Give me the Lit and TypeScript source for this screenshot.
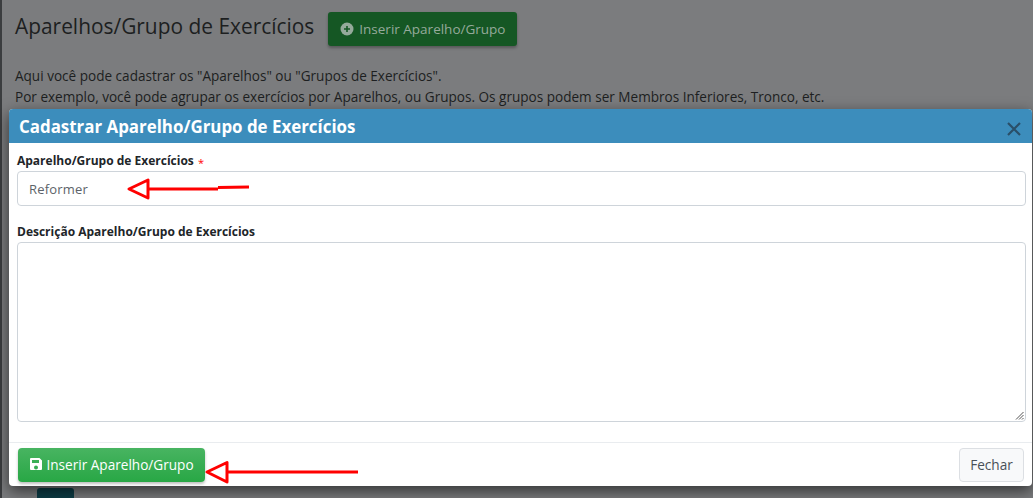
import { LitElement, html, css, svg } from "lit";
import { customElement } from "lit/decorators.js";

const arrows = svg`
  <g fill="none" stroke="#f00" stroke-width="3" stroke-linejoin="round">
    <path d="M129 189 L148 180 L148 198 Z"/>
    <path d="M148 189 L218 189 M218 187.5 L249 187"/>
    <path d="M207 472 L227 462.5 L227 482 Z"/>
    <path d="M227 472 L358 472"/>
  </g>`;

@customElement("app-root")
export class AppRoot extends LitElement {
  static styles = css`
    :host { display: block; width: 1033px; height: 498px; position: relative; overflow: hidden; background: #7b7c7e; font-family: "Open Sans", "Noto Sans", sans-serif; color: #212529; }
    .page { height: 498px; box-sizing: border-box; padding: 12px 0 0 13px; border-left: 2px solid #3b3d3f; color: #1d1f21; }
    .head { display: flex; align-items: flex-start; gap: 14px; }
    h1 { margin: 0; font-size: 20.9px; font-weight: 400; line-height: 28px; }
    .ghost { height: 34px; padding: 0 12px; display: flex; align-items: center; gap: 5px; background: #155724; color: #95aa9b; border-radius: 3px; font-size: 13.5px; box-shadow: 0 2px 3px rgba(0,0,0,.3); }
    .ghost svg { width: 14px; height: 14px; }
    .intro { margin: 19px 0 0; font-size: 13.57px; line-height: 21px; }
    .intro p { margin: 0; }
    .peek { position: absolute; left: 37px; top: 488px; width: 37px; height: 10px; background: #0d3d46; border-radius: 3px 3px 0 0; }
    .peektext { position: absolute; left: 85px; top: 495px; font-size: 12px; font-weight: 600; color: #1d1f21; }
    .modal { position: absolute; left: 9px; top: 109px; width: 1023px; height: 377px; background: #fff; border-radius: 4px; box-shadow: 0 5px 15px rgba(0,0,0,.6); display: flex; flex-direction: column; overflow: hidden; }
    .mhead { height: 34px; flex: none; background: #3c8dbc; color: #fff; display: flex; align-items: center; justify-content: space-between; padding: 0 11px 0 10px; }
    .mhead h2 { margin: 0; font-size: 16.9px; font-weight: 700; }
    .x { width: 14px; height: 14px; margin-top: 5px; }
    .mbody { flex: 1; padding: 9px 6px 0 8px; display: flex; flex-direction: column; }
    label { font-size: 12px; font-weight: 700; line-height: 18px; color: #212529; display: block; }
    .req { color: #f00; font-size: 11px; font-weight: 400; margin-left: 1px; position: relative; top: 2px; }
    .input { margin-top: 1px; height: 33px; box-sizing: content-box; border: 1px solid #ced4da; border-radius: 4px; display: flex; align-items: center; padding: 1px 0 0 11px; height: 32px; font-size: 13px; color: #5c6369; letter-spacing: .2px; }
    .l2 { margin-top: 17px; }
    .area { margin-top: 1px; height: 178px; border: 1px solid #ced4da; border-radius: 4px; position: relative; }
    .grip { position: absolute; right: 1px; bottom: 1px; width: 9px; height: 9px; }
    .mfoot { height: 43px; flex: none; border-top: 1px solid #e9ecef; display: flex; align-items: center; justify-content: space-between; padding: 0 8px 0 9px; }
    .save { height: 34px; width: 187px; box-sizing: border-box; display: flex; align-items: center; justify-content: center; gap: 3px; color: #fff; font-size: 13.6px; border-radius: 4px; background: linear-gradient(#48b461, #28a745); box-shadow: 0 2px 3px rgba(0,0,0,.25); }
    .save svg { width: 14px; height: 14px; margin-top: -2px; }
    .close { height: 34px; width: 65px; box-sizing: border-box; display: flex; align-items: center; justify-content: center; color: #495057; font-size: 13.6px; background: #f8f9fa; border: 1px solid #dcdfe3; border-radius: 4px; }
    .over { position: absolute; left: 0; top: 0; pointer-events: none; }
  `;

  render() {
    return html`
      <div class="page">
        <div class="head">
          <h1>Aparelhos/Grupo de Exercícios</h1>
          <div class="ghost">
            <svg viewBox="0 0 14 14"><circle cx="7" cy="7" r="6.5" fill="#95aa9b"/><path d="M7 4v6M4 7h6" stroke="#155724" stroke-width="1.6"/></svg>
            Inserir Aparelho/Grupo
          </div>
        </div>
        <div class="intro">
          <p>Aqui você pode cadastrar os "Aparelhos" ou "Grupos de Exercícios".</p>
          <p>Por exemplo, você pode agrupar os exercícios por Aparelhos, ou Grupos. Os grupos podem ser Membros Inferiores, Tronco, etc.</p>
        </div>
      </div>
      <div class="peek"></div>
      <div class="peektext">Wall Unit</div>
      <div class="modal">
        <div class="mhead">
          <h2>Cadastrar Aparelho/Grupo de Exercícios</h2>
          <svg class="x" viewBox="0 0 14 14"><path d="M1 1l12 12M13 1L1 13" stroke="#2a4f68" stroke-width="2.2"/></svg>
        </div>
        <div class="mbody">
          <label>Aparelho/Grupo de Exercícios <span class="req">*</span></label>
          <div class="input">Reformer</div>
          <label class="l2">Descrição Aparelho/Grupo de Exercícios</label>
          <div class="area">
            <svg class="grip" viewBox="0 0 9 9"><path d="M1 8.5L8.5 1M4 8.5L8.5 4M7 8.5L8.5 7" stroke="#555" stroke-width="1"/></svg>
          </div>
        </div>
        <div class="mfoot">
          <div class="save">
            <svg viewBox="0 0 14 14"><path fill="#fff" fill-rule="evenodd" d="M2 1h8.5L13 3.5V12a1 1 0 0 1-1 1H2a1 1 0 0 1-1-1V2a1 1 0 0 1 1-1zm1 2v3h7V3zm4 5.5a2 2 0 1 0 0 4 2 2 0 0 0 0-4z"/></svg>
            Inserir Aparelho/Grupo
          </div>
          <div class="close">Fechar</div>
        </div>
      </div>
      <svg class="over" width="1033" height="498">${arrows}</svg>
    `;
  }
}
